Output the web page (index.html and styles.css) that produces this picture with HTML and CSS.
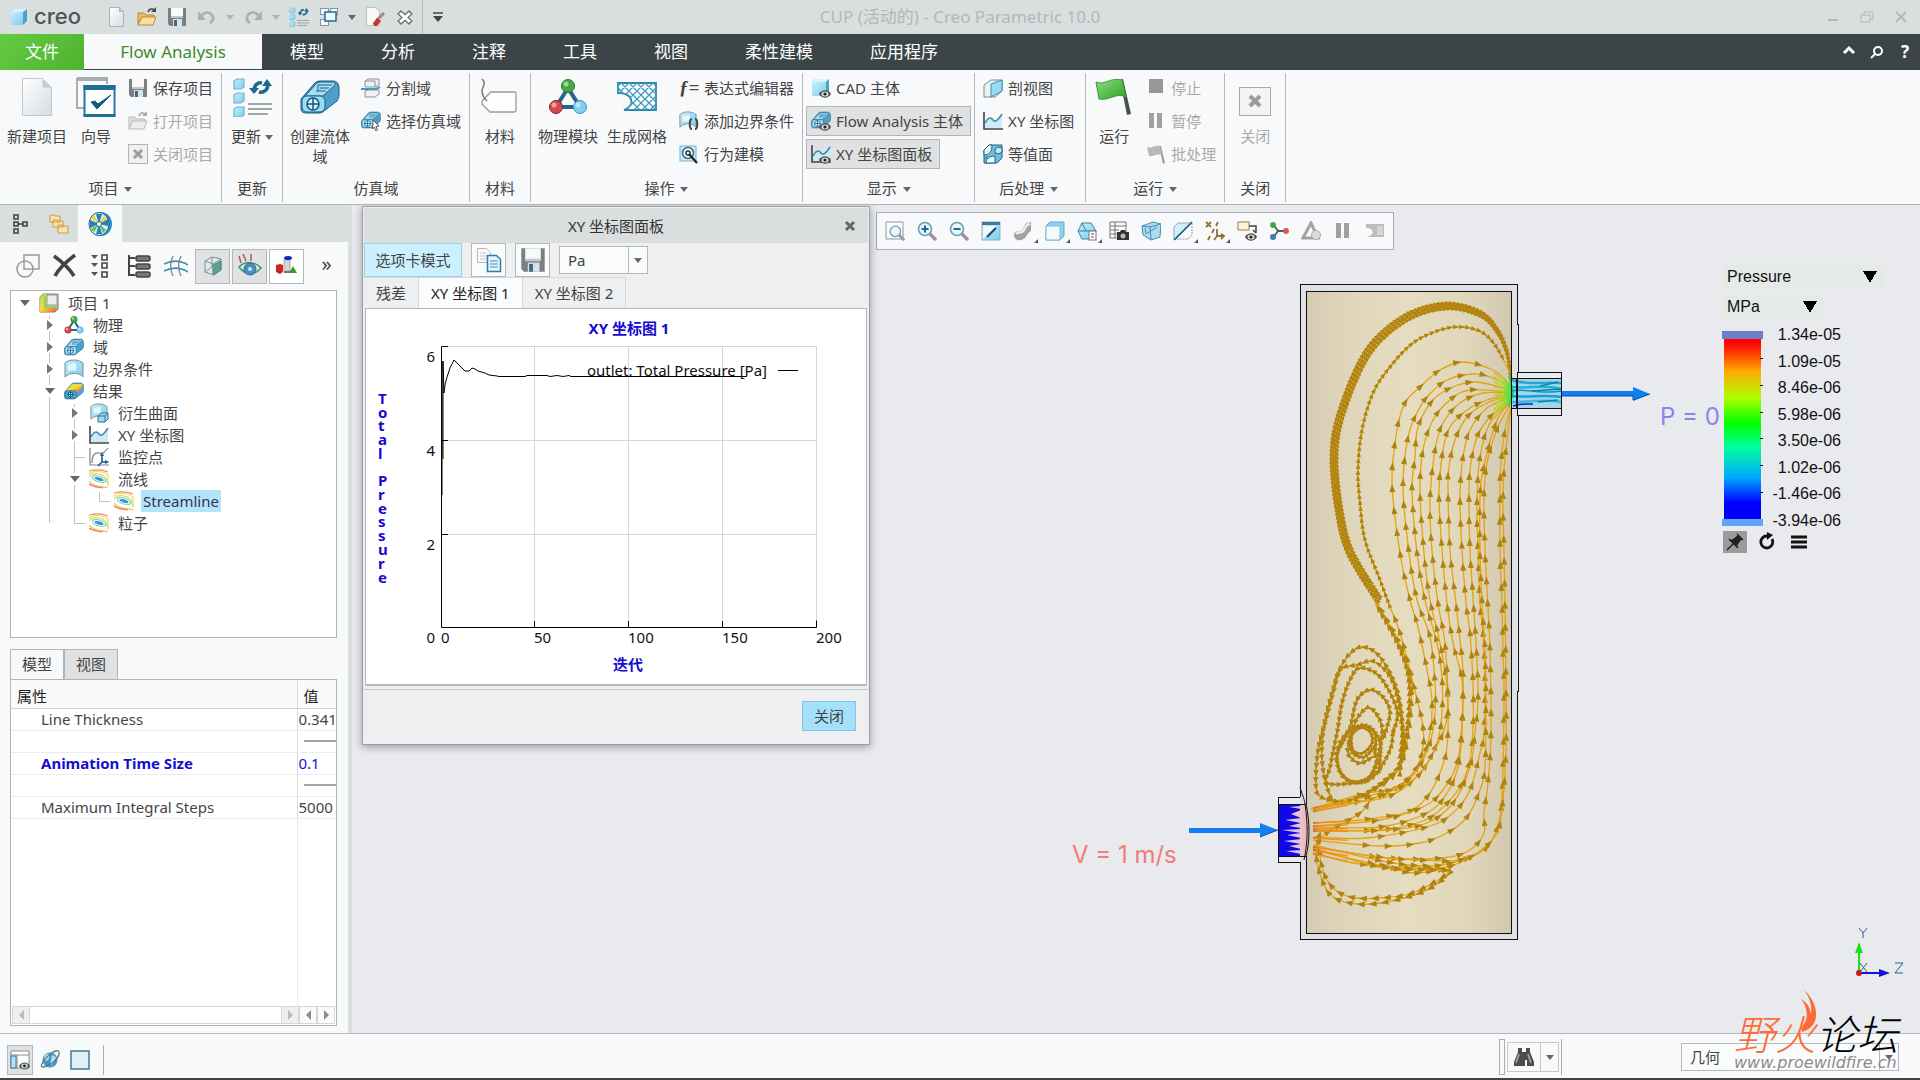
FILE: index.html
```html
<!DOCTYPE html>
<html lang="zh-CN">
<head>
<meta charset="UTF-8" />
<meta name="viewport" content="width=device-width, initial-scale=1"/>
<title>CUP (活动的) - Creo Parametric 10.0</title>
<link rel="stylesheet" href="styles.css">
</head>
<body>
<svg class="sprite" aria-hidden="true">
  <defs>
    <linearGradient id="gCube" x1="0" y1="0" x2="1" y2="1"><stop offset="0" stop-color="#c4eefc"/><stop offset="1" stop-color="#7fcdee"/></linearGradient>
    <linearGradient id="gPaper" x1="0" y1="0" x2="1" y2="1"><stop offset="0" stop-color="#fff"/><stop offset="1" stop-color="#d3dde4"/></linearGradient>
    <linearGradient id="gFlag" x1="0" y1="0" x2="1" y2="1"><stop offset="0" stop-color="#8be07b"/><stop offset="1" stop-color="#2f9e2b"/></linearGradient>
    <linearGradient id="gHot" x1="0" y1="0" x2="1" y2="1"><stop offset="0" stop-color="#9be04a"/><stop offset=".45" stop-color="#ffd93a"/><stop offset="1" stop-color="#f0502e"/></linearGradient>
  </defs>
  <symbol id="i-cube" viewBox="0 0 20 20"><path d="M2 5l4-3h12v12l-4 4H2z" fill="#4ba3c7"/><path d="M2 5l4-3h12l-4 3z" fill="#d9f4fd"/><rect x="2" y="5" width="12" height="13" fill="url(#gCube)"/></symbol>
  <symbol id="i-new" viewBox="0 0 20 20"><path d="M2.500 .500h10l4 4v15h-14z" fill="url(#gPaper)" stroke="#a9b1b6"/><path d="M12.500 .500v4h4" fill="#c5ccd0" stroke="#a9b1b6"/></symbol>
  <symbol id="i-newbig" viewBox="0 0 40 40"><path d="M5.500 1.500h20l9 9v28h-29z" fill="url(#gPaper)" stroke="#c0c6ca"/><path d="M25.500 1.500v9h9" fill="#c5ccd0"/></symbol>
  <symbol id="i-open" viewBox="0 0 20 20"><path d="M1 18V6h6l2 2h8v3" fill="#e9bd63" stroke="#b98a33"/><path d="M1 18l4-8h14l-3 8z" fill="#fbdf9e" stroke="#b98a33"/><path d="M11 5c1-3 4-4 6-2" stroke="#3c4a55" stroke-width="1.600" fill="none"/><path d="M19 0v5h-5z" fill="#3c4a55"/></symbol>
  <symbol id="i-opengray" viewBox="0 0 20 20"><path d="M1 18V6h6l2 2h8v3" fill="#ddd" stroke="#bbb"/><path d="M1 18l4-8h14l-3 8z" fill="#ececec" stroke="#bbb"/><path d="M11 5c1-3 4-4 6-2" stroke="#aaa" stroke-width="1.600" fill="none"/><path d="M19 0v5h-5z" fill="#aaa"/></symbol>
  <symbol id="i-save" viewBox="0 0 20 20"><path d="M1 1h18v18H3l-2-2z" fill="#7b7f82"/><rect x="4" y="1" width="12" height="9" fill="#f7f9fa"/><rect x="4" y="9" width="12" height="2" fill="#c2c8cb"/><rect x="6" y="12" width="9" height="7" fill="#cfe6f2"/><rect x="7" y="13" width="3" height="6" fill="#4d6472"/></symbol>
  <symbol id="i-undo" viewBox="0 0 20 20"><path d="M4 9c3-4 8-5 11-1 2 3 1 6-2 8" fill="none" stroke="#a9b0b2" stroke-width="2.600"/><path d="M1 4v9h8z" fill="#a9b0b2"/></symbol>
  <symbol id="i-redo" viewBox="0 0 20 20"><path d="M16 9c-3-4-8-5-11-1-2 3-1 6 2 8" fill="none" stroke="#a9b0b2" stroke-width="2.600"/><path d="M19 4v9h-8z" fill="#a9b0b2"/></symbol>
  <symbol id="i-update" viewBox="0 0 40 40"><g fill="url(#gCube)" stroke="#6cb7d4" stroke-width="1.200"><path d="M2 4l3-2h7v8l-3 2H2z"/><path d="M2 18l3-2h7v8l-3 2H2z"/><path d="M2 32l3-2h7v8l-3 2H2z"/></g><path d="M22 14c0-6 4-9 8-8" fill="none" stroke="#1d6a8d" stroke-width="3.500"/><path d="M17 11h10l-5 6z" fill="#1d6a8d"/><path d="M36 7c0 6-4 9-9 8" fill="none" stroke="#1d6a8d" stroke-width="3.500"/><path d="M30 9h10l-5-7z" fill="#1d6a8d"/><path d="M16 27h24M16 32h24M16 37h20" stroke="#a1a6a8" stroke-width="2"/></symbol>
  <symbol id="i-windows" viewBox="0 0 20 20"><g fill="#f5f7f8" stroke="#8b9295"><rect x="1.500" y="1.500" width="8" height="6"/><rect x="11.500" y="1.500" width="7" height="6"/><rect x="1.500" y="12.500" width="8" height="6"/></g><rect x="6" y="5" width="11" height="9" fill="#eef9fd" stroke="#1d6a9a" stroke-width="1.500"/></symbol>
  <symbol id="i-erase" viewBox="0 0 20 20"><path d="M1.500 .500h9l4 4v14h-13z" fill="#f9fafa" stroke="#b9bfc2"/><path d="M19 6l-7 7" stroke="#a58a72" stroke-width="3"/><path d="M12 11l4 3-4 5c-2 1-4-1-4-3z" fill="#c8362e"/></symbol>
  <symbol id="i-closewin" viewBox="0 0 20 20"><path d="M4 5l12 11M16 5L4 16" stroke="#6a7072" stroke-width="5.500"/><path d="M5 6l10 9M15 6L5 15" stroke="#fff" stroke-width="3"/></symbol>
  <symbol id="i-wizard" viewBox="0 0 40 40"><path d="M1 1h30v6M1 1v30h7" fill="none" stroke="#a9adaf" stroke-width="2"/><rect x="1" y="1" width="30" height="3" fill="#a9adaf"/><rect x="8.500" y="9" width="30" height="29" fill="#fff" stroke="#2478a0" stroke-width="2"/><path d="M7.500 8h32v5h-32zM7.500 37h32v3h-32z" fill="#1f6f96"/><path d="M15 25l6 7 14-14-13 9-3-3z" fill="#155a80" stroke="#155a80"/></symbol>
  <symbol id="i-xbox" viewBox="0 0 20 20"><rect x=".500" y=".500" width="19" height="19" fill="#f0f0f0" stroke="#b3b3b3"/><path d="M6 6l8 8M14 6l-8 8" stroke="#9c9c9c" stroke-width="3"/></symbol>
  <symbol id="i-xboxbig" viewBox="0 0 32 40"><rect x=".500" y="10.500" width="31" height="28" fill="#f4f4f4" stroke="#a9a9a9"/><path d="M11 19l10 10M21 19l-10 10" stroke="#9c9c9c" stroke-width="4"/></symbol>
  <symbol id="i-domain" viewBox="0 0 40 36"><path d="M1 20L14 5c1-2 4-3 6-3h13c4 0 6 3 6 7v7c0 3-1 4-2 6L24 32c-2 2-3 2-6 2H6c-4 0-5-2-5-5z" fill="#4e9fc6" stroke="#1d5f86"/><path d="M5 17L16 5c2-2 4-2 6-2h10c3 0 4 2 2 4L23 17z" fill="#a7dcf2" stroke="#1d5f86"/><path d="M18 6h14M18 6v6M16 12h10M20 9h9" stroke="#1d5f86" fill="none"/><rect x="2" y="17" width="23" height="16" rx="5" fill="#9adcf5" stroke="#1d5f86"/><circle cx="13" cy="25" r="6" fill="#d4f1fb" stroke="#17567c" stroke-width="1.500"/><path d="M13 19v12M7 25h12" stroke="#17567c" stroke-width="1.500"/></symbol>
  <symbol id="i-result" viewBox="0 0 40 36"><path d="M1 20L14 5c1-2 4-3 6-3h13c4 0 6 3 6 7v7c0 3-1 4-2 6L24 32c-2 2-3 2-6 2H6c-4 0-5-2-5-5z" fill="#57a7cc" stroke="#1d5f86"/><path d="M4 17L16 4h18c3 1 4 4 2 6L25 21z" fill="url(#gHot)"/><rect x="2" y="17" width="23" height="16" rx="5" fill="#3da5d3" stroke="#1d5f86"/><circle cx="13" cy="25" r="5" fill="#d4f1fb" stroke="#17567c" stroke-width="2"/><path d="M13 19v12M7 25h12" stroke="#17567c" stroke-width="2"/></symbol>
  <symbol id="i-split" viewBox="0 0 20 20"><path d="M4 3l3-2h11v6l-4 2H4zM4 13l3-1h11v4l-4 3H4z" fill="#f0f1f2" stroke="#8d9396"/><path d="M4 3h10v6" fill="none" stroke="#8d9396"/><path d="M0 11h15l4-2" stroke="#3d9dbd" stroke-width="2" fill="none"/></symbol>
  <symbol id="i-selectdom" viewBox="0 0 20 20"><use href="#i-domain" x="0" y="0" width="20" height="18"/><path d="M12 9l6 6-3 .500 1.500 3.500-2 .500-1-3.500-2 2z" fill="#fff" stroke="#555"/></symbol>
  <symbol id="i-material" viewBox="0 0 40 40"><path d="M2 24l9-9h23c2 0 2 1 2 2v16c0 2-1 2-2 2H10L2 27z" fill="#fdfdfd" stroke="#9b9b9b" stroke-width="1.300"/><path d="M2 2c5 4 0 8 0 12s2 7 5 10" fill="none" stroke="#777" stroke-width="1.500"/></symbol>
  <symbol id="i-physics" viewBox="0 0 40 38"><path d="M20 10L8 29h24z" fill="none" stroke="#27658a" stroke-width="4"/><circle cx="20" cy="8" r="6.500" fill="#46a83f" stroke="#237a25"/><circle cx="8" cy="29" r="6.500" fill="#d9484b" stroke="#8c1d20"/><circle cx="32" cy="29" r="6.500" fill="#85ccf3" stroke="#4396c4"/><g fill="#fff" opacity=".5"><circle cx="18" cy="6" r="2.500"/><circle cx="6" cy="27" r="2.500"/><circle cx="30" cy="27" r="2.500"/></g></symbol>
  <symbol id="i-mesh" viewBox="0 0 40 40"><clipPath id="cMesh"><path d="M1 6h38v27H7c12-5 9-17-6-17z"/></clipPath><path d="M1 6h38v27H7c12-5 9-17-6-17z" fill="#fff" stroke="#2b88ad" stroke-width="1.800"/><path clip-path="url(#cMesh)" d="M-4 6l27 27M4 6l27 27M12 6l27 27M20 6l27 27M28 6l27 27M36 6l9 9M4 6l-9 9M12 6l-15 15M20 6l-27 27M28 6L1 33M36 6L9 33M44 6L17 33M52 6L25 33M60 6L33 33" fill="none" stroke="#3f9cc0" stroke-width="1.300"/></symbol>
  <symbol id="i-face" viewBox="0 0 20 20"><path d="M1 4c4-4 13-4 18 0v14c-4-5-13-5-18 0z" fill="url(#gCube)" stroke="#7d8b92"/><path d="M4 6c4-2 6-2 8-1v7c-3-1-5-1-8 0z" fill="#e4f7fd"/></symbol>
  <symbol id="i-addbc" viewBox="0 0 20 20"><use href="#i-face" width="18" height="18"/><path d="M13 8c-3 0-3 10 0 10M16 8c3 0 3 10 0 10" fill="none" stroke="#444" stroke-width="2"/></symbol>
  <symbol id="i-behave" viewBox="0 0 20 20"><rect x="1" y="2" width="16" height="15" fill="#c9e9f5" stroke="#7ab4cc"/><circle cx="9" cy="9" r="5.500" fill="#eef8fc" stroke="#3a6f8a" stroke-width="1.500"/><circle cx="9" cy="9" r="2" fill="none" stroke="#333" stroke-width="1.500"/><path d="M10 10l8 9" stroke="#222" stroke-width="2.200"/></symbol>
  <symbol id="i-eye" viewBox="0 0 12 8"><path d="M0 4c3-5 9-5 12 0-3 5-9 5-12 0z" fill="#4c4c4c"/><ellipse cx="6" cy="4" rx="3.500" ry="2.600" fill="#ddd"/><circle cx="6" cy="4" r="1.600" fill="#222"/></symbol>
  <symbol id="i-cubeeye" viewBox="0 0 20 20"><path d="M1 4l3-3h14v14l-3 3H1z" fill="#4ba3c7"/><path d="M1 4l3-3h14l-3 3z" fill="#d9f4fd"/><rect x="1" y="4" width="14" height="14" fill="url(#gCube)"/><use href="#i-eye" x="8" y="12" width="12" height="8"/></symbol>
  <symbol id="i-domeye" viewBox="0 0 20 20"><use href="#i-domain" width="20" height="18"/><use href="#i-eye" x="8" y="12" width="12" height="8"/></symbol>
  <symbol id="i-xy" viewBox="0 0 20 20"><path d="M2 13c3-6 6-6 8-3s5 0 9-6v13H2z" fill="#cdeaf5"/><path d="M2 12c3-6 6-6 8-3s5 0 9-6" fill="none" stroke="#3b8aad" stroke-width="1.500"/><path d="M1 1v17h19" fill="none" stroke="#444" stroke-width="1.600"/></symbol>
  <symbol id="i-xyeye" viewBox="0 0 20 20"><use href="#i-xy" width="20" height="20"/><use href="#i-eye" x="8" y="12" width="12" height="8"/></symbol>
  <symbol id="i-section" viewBox="0 0 20 20"><path d="M1 7l7-5h11v11l-7 6H1z" fill="#eef1f2" stroke="#7b8a91"/><path d="M8 6l11-4v11l-11 6z" fill="#9bdcf5" stroke="#3d8bac"/></symbol>
  <symbol id="i-iso" viewBox="0 0 20 20"><path d="M1 6l5-5h13v13l-5 5H1z" fill="#6fc0e0" stroke="#23617f"/><path d="M1 11c5 0 8-3 8-10H6L1 6z" fill="#e8f7fc" stroke="#23617f"/><path d="M3 19c0-4 3-7 9-7v7z" fill="#e8f7fc" stroke="#23617f"/><path d="M12 5l3-2 4 1v4l-3 2-4-1z" fill="#bfe8f7" stroke="#23617f"/><path d="M1 15l4-3" stroke="#23617f"/></symbol>
  <symbol id="i-flag" viewBox="0 0 40 40"><path d="M26 3l3-1 8 35-4 1z" fill="#4d4d4d"/><path d="M2 5c8 4 14-5 26-2l4 17c-10-5-16 4-27 2z" fill="url(#gFlag)" stroke="#3a9a35"/></symbol>
  <symbol id="i-flaggray" viewBox="0 0 20 20"><path d="M13 2h2l4 17-2 1z" fill="#9c9c9c"/><path d="M1 3c4 2 8-2 13-1l2 9c-5-2-8 2-13 1z" fill="#b9b9b9"/></symbol>
  <symbol id="i-stop" viewBox="0 0 20 20"><rect x="3" y="1" width="14" height="14" fill="#979797"/></symbol>
  <symbol id="i-pause" viewBox="0 0 20 20"><path d="M3 2h5v15H3zM11 2h5v15h-5z" fill="#a0a0a0"/></symbol>
  <symbol id="i-stream" viewBox="0 0 20 20"><g fill="none" stroke-width="1.200"><path d="M0 5c6-4 14-3 19 1v11" stroke="#f7d862"/><path d="M0 2c8-2 14-1 19 1" stroke="#f58a5c"/><path d="M0 8c4-5 13-4 17 1l2 6" stroke="#c3e35a"/><path d="M0 12c4 5 10 5 19 7" stroke="#f4c04a"/><path d="M0 15c4 3 8 3 14 4" stroke="#ee6a5c"/></g><ellipse cx="10" cy="10" rx="7" ry="3" fill="#d7f5f0" stroke="#5fd0c4" transform="rotate(18 10 10)"/><ellipse cx="10" cy="10" rx="4.500" ry="1.500" fill="#3f8cc8" transform="rotate(18 10 10)"/></symbol>
  <symbol id="i-derived" viewBox="0 0 20 20"><use href="#i-face" width="20" height="18"/><path d="M9 13l3-3h7v6l-3 3H9z" fill="#9bdcf5" stroke="#3b6f88"/><path d="M9 13h7v6M16 13l3-3" fill="none" stroke="#3b6f88"/></symbol>
  <symbol id="i-monitor" viewBox="0 0 20 20"><path d="M1 1v17h19M3 16C3 8 6 5 10 6s5 0 9-5" fill="none" stroke="#7c8184" stroke-width="1.200"/><path d="M13 7v8h6M13 15l-4 4" stroke="#1f5e96" stroke-width="1.600" fill="none"/><path d="M13 5l-2 4h4zM20 15l-4-2v4z" fill="#1f5e96"/></symbol>
  <symbol id="i-project" viewBox="0 0 20 20"><path d="M1 4l3-3h15v15l-3 3H1z" fill="#c9d3c4" stroke="#84706a"/><path d="M1 4l3-3h4v12h11l-3 6H1z" fill="url(#gHot)"/><path d="M6 3v11h12" stroke="#7fd46a" stroke-width="2" fill="none"/><rect x="8" y="2" width="10" height="10" fill="#ececec" stroke="#999"/></symbol>
  <symbol id="i-copy" viewBox="0 0 26 26"><path d="M1.500 1.500h9l4 4v10h-13z" fill="#fafafa" stroke="#b1b7ba"/><path d="M4 6h6M4 9h8M4 12h8" stroke="#c1c7ca"/><path d="M11.500 8.500h9l4 4v12h-13z" fill="#e8f5fb" stroke="#2f7ea6" stroke-width="1.500"/><path d="M14 14h8M14 17h8M14 20h8" stroke="#3a8fb7"/></symbol>
  <symbol id="i-globe" viewBox="0 0 20 20"><circle cx="10" cy="10" r="7.500" fill="#3b9cca"/><path d="M5 5c4-3 5 0 4 3s-4 4-5 1zM12 5l4 2-2 6-4 3z" fill="#b6e0f2"/><path d="M3 17C-1 18 3 10 9 5s11-6 10-1-8 12-16 13" fill="none" stroke="#6a767c" stroke-width="1.300"/></symbol>
  <symbol id="i-lens" viewBox="0 0 20 20"><path d="M12 12l7 7" stroke="#9a9a9a" stroke-width="3.500"/><circle cx="8" cy="8" r="6.500" fill="#e9f7fd" stroke="#6e9fb5" stroke-width="1.600"/></symbol>
</svg>

<header class="titlebar">
  <div class="brand"><svg class="ic"><use href="#i-cube"/></svg><span>creo</span></div>
  <div class="quick">
    <button class="qa" aria-label="新建"><svg class="ic"><use href="#i-new"/></svg></button>
    <button class="qa" aria-label="打开"><svg class="ic"><use href="#i-open"/></svg></button>
    <button class="qa" aria-label="保存"><svg class="ic"><use href="#i-save"/></svg></button>
    <button class="qa" aria-label="撤销"><svg class="ic"><use href="#i-undo"/></svg></button>
    <button class="qa-drop dim" aria-label="撤销列表"><i class="tri"></i></button>
    <button class="qa" aria-label="重做"><svg class="ic"><use href="#i-redo"/></svg></button>
    <button class="qa-drop dim" aria-label="重做列表"><i class="tri"></i></button>
    <button class="qa" aria-label="重新生成"><svg class="ic"><use href="#i-update"/></svg></button>
    <button class="qa" aria-label="窗口"><svg class="ic"><use href="#i-windows"/></svg></button>
    <button class="qa-drop" aria-label="窗口列表"><i class="tri"></i></button>
    <button class="qa" aria-label="拭除"><svg class="ic"><use href="#i-erase"/></svg></button>
    <button class="qa" aria-label="关闭窗口"><svg class="ic"><use href="#i-closewin"/></svg></button>
    <button class="qa qa-more" aria-label="自定义"><svg class="ic14" viewBox="0 0 14 14"><path d="M2 3h10" stroke-width="1.500"/><path d="M2 6h10l-5 6z" fill="currentColor" stroke="none"/></svg></button>
  </div>
  <div class="title">CUP (活动的) - Creo Parametric 10.0</div>
  <div class="winctl">
    <button aria-label="最小化"><svg class="ic14" viewBox="0 0 14 14"><path d="M2 10h10" stroke-width="2"/></svg></button>
    <button aria-label="还原"><svg class="ic14" viewBox="0 0 14 14"><path d="M4 4V2h9v7h-3M1 5h9v7H1z"/></svg></button>
    <button aria-label="关闭"><svg class="ic14" viewBox="0 0 14 14"><path d="M2 2l10 10M12 2L2 12" stroke-width="2"/></svg></button>
  </div>
</header>

<nav class="tabs">
  <button class="tab tab-file">文件</button>
  <button class="tab tab-active">Flow Analysis</button>
  <button class="tab">模型</button>
  <button class="tab">分析</button>
  <button class="tab">注释</button>
  <button class="tab">工具</button>
  <button class="tab">视图</button>
  <button class="tab">柔性建模</button>
  <button class="tab">应用程序</button>
  <div class="tabs-end">
    <button aria-label="最小化功能区"><svg class="ic14" viewBox="0 0 14 14"><path d="M2 8l5-5 5 5" stroke-width="3"/></svg></button>
    <button aria-label="搜索"><svg class="ic14" viewBox="0 0 14 14"><circle cx="8" cy="6" r="4" stroke-width="2"/><path d="M5 9l-4 4" stroke-width="2"/></svg></button>
    <button aria-label="帮助">?</button>
  </div>
</nav>

<section class="ribbon">
  <div class="group">
    <div class="group-body">
      <button class="big"><svg class="ic40"><use href="#i-newbig"/></svg>新建项目</button>
      <button class="big big-50"><svg class="ic40"><use href="#i-wizard"/></svg>向导</button>
      <div class="stack">
        <button class="small"><svg class="ic"><use href="#i-save"/></svg>保存项目</button>
        <button class="small" disabled><svg class="ic"><use href="#i-opengray"/></svg>打开项目</button>
        <button class="small" disabled><svg class="ic"><use href="#i-xbox"/></svg>关闭项目</button>
      </div>
    </div>
    <div class="group-name">项目 <i class="tri"></i></div>
  </div>
  <div class="group">
    <div class="group-body">
      <button class="big big-54"><svg class="ic40"><use href="#i-update"/></svg><span>更新 <i class="tri"></i></span></button>
    </div>
    <div class="group-name">更新</div>
  </div>
  <div class="group">
    <div class="group-body">
      <button class="big"><svg class="ic40"><use href="#i-domain"/></svg>创建流体域</button>
      <div class="stack">
        <button class="small"><svg class="ic"><use href="#i-split"/></svg>分割域</button>
        <button class="small"><svg class="ic"><use href="#i-selectdom"/></svg>选择仿真域</button>
      </div>
    </div>
    <div class="group-name">仿真域</div>
  </div>
  <div class="group">
    <div class="group-body">
      <button class="big big-54"><svg class="ic40"><use href="#i-material"/></svg>材料</button>
    </div>
    <div class="group-name">材料</div>
  </div>
  <div class="group">
    <div class="group-body">
      <button class="big"><svg class="ic40"><use href="#i-physics"/></svg>物理模块</button>
      <button class="big big-70"><svg class="ic40"><use href="#i-mesh"/></svg>生成网格</button>
      <div class="stack">
        <button class="small"><span class="fx">ƒ=</span>表达式编辑器</button>
        <button class="small"><svg class="ic"><use href="#i-addbc"/></svg>添加边界条件</button>
        <button class="small"><svg class="ic"><use href="#i-behave"/></svg>行为建模</button>
      </div>
    </div>
    <div class="group-name">操作 <i class="tri"></i></div>
  </div>
  <div class="group">
    <div class="group-body">
      <div class="stack">
        <button class="small"><svg class="ic"><use href="#i-cubeeye"/></svg>CAD 主体</button>
        <button class="small pressed" aria-pressed="true"><svg class="ic"><use href="#i-domeye"/></svg>Flow Analysis 主体</button>
        <button class="small pressed" aria-pressed="true"><svg class="ic"><use href="#i-xyeye"/></svg>XY 坐标图面板</button>
      </div>
    </div>
    <div class="group-name">显示 <i class="tri"></i></div>
  </div>
  <div class="group group-wide">
    <div class="group-body">
      <div class="stack">
        <button class="small"><svg class="ic"><use href="#i-section"/></svg>剖视图</button>
        <button class="small"><svg class="ic"><use href="#i-xy"/></svg>XY 坐标图</button>
        <button class="small"><svg class="ic"><use href="#i-iso"/></svg>等值面</button>
      </div>
    </div>
    <div class="group-name">后处理 <i class="tri"></i></div>
  </div>
  <div class="group">
    <div class="group-body">
      <button class="big big-50"><svg class="ic40"><use href="#i-flag"/></svg>运行</button>
      <div class="stack">
        <button class="small" disabled><svg class="ic"><use href="#i-stop"/></svg>停止</button>
        <button class="small" disabled><svg class="ic"><use href="#i-pause"/></svg>暂停</button>
        <button class="small" disabled><svg class="ic"><use href="#i-flaggray"/></svg>批处理</button>
      </div>
    </div>
    <div class="group-name">运行 <i class="tri"></i></div>
  </div>
  <div class="group">
    <div class="group-body">
      <button class="big big-54" disabled><svg class="ic40"><use href="#i-xboxbig"/></svg>关闭</button>
    </div>
    <div class="group-name">关闭</div>
  </div>
</section>

<main class="work">
  <aside class="side">
    <div class="side-tabs">
      <button aria-label="模型树"><svg class="ic" viewBox="0 0 20 20" fill="none" stroke="#444" stroke-width="1.600"><path d="M4 1h4v4H4zM4 8h4v4H4zM4 15h4v4H4zM13 8h4v4h-4zM8 10h5"/></svg></button>
      <button aria-label="文件夹浏览器"><svg class="ic" viewBox="0 0 20 20" fill="#fbe3a9" stroke="#c39a4b"><path d="M1 1h4l1 1h5v6H1zM4 6h4l1 1h5v6H4zM9 11h4l1 1h5v7H9z"/></svg></button>
      <button class="on" aria-label="Flow Analysis 树"><svg class="ic24" viewBox="0 0 24 24"><ellipse cx="13" cy="12" rx="11" ry="12" fill="#2a8fc4"/><ellipse cx="11" cy="12" rx="10" ry="11.500" fill="#cfeefa" stroke="#1d5f86"/><path d="M11 12L8 2l6 0zM11 12l9-5v7zM11 12l3 10-6 0zM11 12l-9 4V8z" fill="#2a7fb4"/><path d="M11 12l5-8 3 3zM11 12L3 6l3-3z" fill="#f5d33c"/><path d="M11 12l7 6-3 3zM11 12l-5 8-3-3z" fill="#5cc04a"/><circle cx="11" cy="12" r="2.500" fill="#fff" stroke="#1d5f86"/></svg></button>
    </div>
    <div class="side-tools">
      <button class="st" aria-label="形状"><svg class="ic24" viewBox="0 0 24 24" fill="#f0f0f0" stroke="#999" stroke-width="1.500"><rect x="8" y="1" width="15" height="14"/><circle cx="9" cy="15" r="8"/></svg></button>
      <button class="st" aria-label="删除"><svg class="ic24" viewBox="0 0 24 24"><path d="M1 2c7 5 15 12 20 20M22 1C14 7 6 14 2 22" stroke="#444" stroke-width="3.500"/></svg></button>
      <button class="st" aria-label="全部展开"><svg class="ic24" viewBox="0 0 24 24"><path d="M1 1h7L4.500 5zM1 9h7L4.500 13zM1 18h7l-3.500 4z" fill="#555"/><path d="M12 1h5v5h-5zM12 9h5v5h-5zM12 18h5v5h-5z" fill="none" stroke="#444" stroke-width="1.600"/></svg></button>
      <button class="st" aria-label="树"><svg class="ic24" viewBox="0 0 24 24"><path d="M2 1v20h6M2 4h6M2 12h6" fill="none" stroke="#444" stroke-width="2"/><g fill="#777" stroke="#444" stroke-width="1.500"><rect x="9" y="2" width="14" height="5" rx="2"/><rect x="9" y="10" width="14" height="5" rx="2"/><rect x="9" y="18" width="14" height="5" rx="2"/></g></svg></button>
      <button class="st" aria-label="曲面网格"><svg class="ic24" viewBox="0 0 24 24" fill="none"><path d="M9 2c-3 6-3 14 0 20M17 2c-3 6-3 14 0 20" stroke="#888" stroke-width="1.500"/><path d="M0 10c8-4 16-4 24 1M0 17c8-4 16-4 24 1" stroke="#3f93b8" stroke-width="1.600"/></svg></button>
      <button class="st framed down" aria-label="显示主体"><svg class="ic24" viewBox="0 0 24 24"><path d="M4 7l7-4 9 2v11l-7 5-9-3z" fill="#dfe9e9" stroke="#7a939c"/><path d="M12 11l8-4v9l-8 5z" fill="#55a887" stroke="#4b8a80"/><path d="M4 7l8 3v11M12 10l8-5M11 3v10l-7 5M11 13l9 3" fill="none" stroke="#7a939c"/></svg></button>
      <button class="st framed down" aria-label="显示"><svg class="ic24" viewBox="0 0 24 24"><path d="M1 13c6-6 16-6 22 1-6 7-14 9-22-1z" fill="#d6eee6" stroke="#3f8f78" stroke-width="1.500"/><circle cx="12" cy="15" r="6" fill="#4f8fc0" stroke="#2a6a8f"/><circle cx="12" cy="15" r="2" fill="#bfe5f5"/><path d="M3 9L1 2M8 7L5 0M13 7V0" stroke="#b05a5a" stroke-width="1.500"/></svg></button>
      <button class="st framed" aria-label="外观"><svg class="ic24" viewBox="0 0 24 24"><path d="M1 11l4-1 3 1v7l-3 2-4-2z" fill="#cf2222"/><rect x="9" y="6" width="6" height="11" fill="#d5d5d5" stroke="#aaa"/><ellipse cx="13" cy="4" rx="4" ry="2" fill="#1228b8"/><path d="M18 12l4 7h-8z" fill="#2da32d"/><path d="M9 17h7v2H9z" fill="#777"/></svg></button>
      <button class="st more" aria-label="更多">»</button>
    </div>

    <ul class="tree">
      <li><div class="node"><button class="exp open" aria-label="折叠"></button><svg class="ic"><use href="#i-project"/></svg><span>项目 1</span></div>
        <ul>
          <li><div class="node"><button class="exp" aria-label="展开"></button><svg class="ic"><use href="#i-physics"/></svg><span>物理</span></div></li>
          <li><div class="node"><button class="exp" aria-label="展开"></button><svg class="ic"><use href="#i-domain"/></svg><span>域</span></div></li>
          <li><div class="node"><button class="exp" aria-label="展开"></button><svg class="ic"><use href="#i-face"/></svg><span>边界条件</span></div></li>
          <li><div class="node"><button class="exp open" aria-label="折叠"></button><svg class="ic"><use href="#i-result"/></svg><span>结果</span></div>
            <ul>
              <li><div class="node"><button class="exp" aria-label="展开"></button><svg class="ic"><use href="#i-derived"/></svg><span>衍生曲面</span></div></li>
              <li><div class="node"><button class="exp" aria-label="展开"></button><svg class="ic"><use href="#i-xy"/></svg><span>XY 坐标图</span></div></li>
              <li><div class="node leaf"><svg class="ic"><use href="#i-monitor"/></svg><span>监控点</span></div></li>
              <li><div class="node"><button class="exp open" aria-label="折叠"></button><svg class="ic"><use href="#i-stream"/></svg><span>流线</span></div>
                <ul>
                  <li><div class="node leaf"><svg class="ic"><use href="#i-stream"/></svg><span class="picked">Streamline</span></div></li>
                </ul>
              </li>
              <li><div class="node leaf"><svg class="ic"><use href="#i-stream"/></svg><span>粒子</span></div></li>
            </ul>
          </li>
        </ul>
      </li>
    </ul>

    <div class="prop-tabs">
      <button>模型</button>
      <button class="on">视图</button>
    </div>
    <div class="props">
      <table>
        <thead><tr><th>属性</th><th>值</th></tr></thead>
        <tbody>
          <tr><td>Line Thickness</td><td>0.341</td></tr>
          <tr><td></td><td><hr></td></tr>
          <tr class="changed"><td>Animation Time Size</td><td>0.1</td></tr>
          <tr><td></td><td><hr></td></tr>
          <tr><td>Maximum Integral Steps</td><td>5000</td></tr>
        </tbody>
      </table>
      <div class="props-fill"><span></span></div>
      <div class="scrolls">
        <button aria-label="向左" class="sb sb-l dim"></button><span class="track"></span><button aria-label="向右" class="sb sb-r dim"></button>
        <button aria-label="值向左" class="sb sb-l"></button><button aria-label="值向右" class="sb sb-r"></button>
      </div>
    </div>
  </aside>

  <section class="viewport">
    <svg class="scene" viewBox="352 205 1568 828">
      <defs>
        <linearGradient id="gWall" x1="0" x2="1" y1="0" y2="0"><stop offset="0" stop-color="#d5cbb3"/><stop offset=".18" stop-color="#dfd5ba"/><stop offset=".5" stop-color="#e6ddc1"/><stop offset=".8" stop-color="#e0d6ba"/><stop offset="1" stop-color="#d2c8b0"/></linearGradient>
        <linearGradient id="gIn" x1="0" x2="1" y1="0" y2="0"><stop offset="0" stop-color="#e8c4d4"/><stop offset="1" stop-color="#ecb7ab"/></linearGradient>
        <linearGradient id="gInlet" gradientUnits="userSpaceOnUse" x1="1311" x2="1370" y1="0" y2="0"><stop offset="0" stop-color="#b0603c"/><stop offset=".15" stop-color="#ef8a2a"/><stop offset="1" stop-color="#e3a00e"/></linearGradient>
        <linearGradient id="gOutlet" gradientUnits="userSpaceOnUse" x1="1492" x2="1513" y1="0" y2="0"><stop offset="0" stop-color="#e0b020"/><stop offset=".5" stop-color="#9fe020"/><stop offset="1" stop-color="#10e860"/></linearGradient>
      </defs>
      <rect x="1300" y="284" width="217" height="655" fill="#dfe0e6"/>
      <rect x="1306" y="291" width="205" height="642" fill="url(#gWall)"/>
      <path d="M1512 378h49v30h-49z" fill="#a5d5e6"/>
      <path d="M1300 804l6 0c4 16 4 36 0 52h-6z" fill="url(#gIn)"/>
      <g id="flow"></g>
      <g id="fan"></g>
      <g fill="none" stroke-width="2.500">
        <path d="M1512 380c12 5 30 2 49 3" stroke="#27a5d8"/>
        <path d="M1512 387c14 2 32-3 49 2" stroke="#16b6e0"/>
        <path d="M1512 391c14-3 32 4 49 0" stroke="#1590cf" stroke-width="1.500"/>
        <path d="M1512 396c14 2 32-2 49 1" stroke="#12a0e4"/>
        <path d="M1512 402c14 0 32-3 49 0" stroke="#35bce4"/>
        <path d="M1513 406c8-3 12-2 20-2" stroke="#1520c8" stroke-width="1.500"/>
        <path d="M1540 386l18-4M1532 391l30-2M1538 402l20-2" stroke="#0e83a8" stroke-width="1.500"/>
      </g>
      <path d="M1278 804h22v52h-22z" fill="#1008e6"/>
      <path d="M1301 806l-12 1 12 2zM1301 810l-10 4 10 4zM1301 818l-16 2 16 3zM1301 823l-12 3 12 2zM1301 829l-19 1 19 3zM1301 833l-14 2 14 3zM1301 839l-17 2 17 3zM1301 844l-12 2 12 3zM1301 850l-15 1 15 3z" fill="#e8c4d4"/>
      <g fill="none" stroke="#111" shape-rendering="crispEdges">
        <path d="M1300 797V284h217v40h1v48M1518 415v276h-1v248h-217v-77"/>
        <path d="M1306 804V291h205v642h-205v-77"/>
        <path d="M1517 372h44v43h-44zM1511 378h50M1511 408h50M1516 378v30"/>
        <path d="M1300 797h-22v65h22M1278 804h28M1278 856h28"/>
      </g>
      <path d="M1300 787c2 8 4 10 5 17 3 20 3 38-1 56M1306 804c4 18 4 38 0 52" fill="none" stroke="#111"/>
      <g fill="#0f7ff2">
        <path d="M1562 391h71v-4l17 7-17 7v-5h-71z"/>
        <path d="M1189 828h71v-5l18 7-18 7v-4h-71z"/>
      </g>
      <path d="M1562 396h71v4l17-6M1260 837l18-7" fill="none" stroke="#0a4f9e"/>
      <text class="note" x="1660" y="425" fill="#8983ee">P = 0</text>
      <text class="note" x="1072" y="863" fill="#f37b78">V = 1 m/s</text>
      <g>
        <path d="M1859 973v-20" stroke="#1be01b" stroke-width="2"/><path d="M1859 942l4 11h-8z" fill="#1be01b"/>
        <path d="M1859 973h22" stroke="#1010e0" stroke-width="2"/><path d="M1890 973l-11 4v-8z" fill="#1010e0"/>
        <circle cx="1859" cy="973" r="3" fill="#c81818"/>
        <path d="M1859 928l4 5 4-5M1863 933v5M1860 963l7 9M1867 963l-7 9M1895 963h8l-8 10h8" fill="none" stroke="#2b5c9e"/>
      </g>
    </svg>

    <div class="view-tools">
      <button aria-label="重新调整"><svg class="ic" viewBox="0 0 20 20"><path d="M1 1h17v17H1z" fill="#fafafa" stroke="#8f979a"/><use href="#i-lens" x="4" y="4" width="16" height="16"/></svg></button>
      <button aria-label="放大"><svg class="ic" viewBox="0 0 20 20"><use href="#i-lens"/><path d="M8 4.500v7M4.500 8h7" stroke="#1a6a96" stroke-width="2"/></svg></button>
      <button aria-label="缩小"><svg class="ic" viewBox="0 0 20 20"><use href="#i-lens"/><path d="M4.500 8h7" stroke="#1a6a96" stroke-width="2"/></svg></button>
      <button aria-label="重画"><svg class="ic" viewBox="0 0 20 20"><rect x="1" y="1" width="18" height="18" fill="url(#gCube)" stroke="#8fb4c3"/><rect x="1" y="1" width="18" height="3" fill="#477b93"/><path d="M2 18V5h13z" fill="#f3fafd"/><path d="M6 16L15 7" stroke="#194a66" stroke-width="2"/></svg></button>
      <button class="more-dot" aria-label="渲染"><svg class="ic" viewBox="0 0 20 20"><path d="M1 14c0-6 7-2 9-6s1-6 8-7v9c-4 1-4 8-10 9-4 1-7-1-7-5z" fill="#a2a2a2"/><path d="M3 13c2-3 6 0 8-4s2-5 6-6" stroke="#ededed" stroke-width="2.500" fill="none"/></svg></button>
      <button class="more-dot" aria-label="显示样式"><svg class="ic" viewBox="0 0 20 20"><path d="M1 5l4-4h14v14l-4 4H1z" fill="#8fd4ef" stroke="#5fa9c6"/><path d="M1 5h14v14H1z" fill="#f1fafd" stroke="#7fbdd6"/></svg></button>
      <button class="more-dot" aria-label="已保存方向"><svg class="ic" viewBox="0 0 20 20"><path d="M1 10l4-8h9l5 8-4 8H5z" fill="url(#gCube)" stroke="#3b7f9e"/><path d="M5 2l4 8H1M9 10h10" fill="none" stroke="#3b7f9e"/><rect x="12" y="10" width="7" height="9" fill="#fff" stroke="#777"/><path d="M14 13h3M14 16h3" stroke="#555"/></svg></button>
      <button aria-label="视图管理器"><svg class="ic" viewBox="0 0 20 20"><path d="M1 1h16v16H1zM1 5h16M1 9h9M1 13h7M6 1v16" fill="#fbfbfb" stroke="#777"/><path d="M8 11h3l1-2h4l1 2h3v8H8z" fill="#333"/><circle cx="14" cy="15" r="2.500" fill="#bbb"/></svg></button>
      <button aria-label="透视"><svg class="ic" viewBox="0 0 20 20"><path d="M1 5l11-4 8 2-1 13-9 3-8-5z" fill="#a8dcf0" stroke="#4b8ba8"/><path d="M1 5l8 1 11-3M9 6l1 13M4 7l1 6 11-7" fill="none" stroke="#4b8ba8"/></svg></button>
      <button class="more-dot" aria-label="截面"><svg class="ic" viewBox="0 0 20 20"><path d="M1 6l4-4h14L3 18H1z" fill="#d4eef8" stroke="#7fb3c9"/><path d="M19 2v12l-4 4H3" fill="none" stroke="#999" stroke-dasharray="2 1"/><path d="M1 19L19 1" stroke="#1f5f80" stroke-width="1.600"/></svg></button>
      <button class="more-dot" aria-label="基准显示"><svg class="ic" viewBox="0 0 20 20" fill="none" stroke="#94702c" stroke-width="1.800"><path d="M1 1l5 5M6 1L1 6M13 1l-2 4M9 8l-2 4M5 15l-2 4M12 8v7h7M12 15l-3 4M16 13l3 2-3 3"/></svg></button>
      <button aria-label="注释显示"><svg class="ic" viewBox="0 0 20 20"><rect x="1" y="1" width="11" height="8" fill="#fdf6dc" stroke="#9a7c3c"/><path d="M12 5h7v7M16 9l3 3" fill="none" stroke="#444" stroke-width="1.500"/><use href="#i-eye" x="8" y="12" width="12" height="8"/></svg></button>
      <button aria-label="旋转中心"><svg class="ic" viewBox="0 0 20 20"><path d="M9 10L4 3M9 10h8M9 10l-5 7" stroke="#555" stroke-width="1.800"/><circle cx="4" cy="4" r="3" fill="#46a83f"/><circle cx="17" cy="10" r="3" fill="#d9585b"/><circle cx="4" cy="16" r="3" fill="#3b7fae"/></svg></button>
      <button aria-label="模拟" disabled><svg class="ic" viewBox="0 0 20 20"><path d="M10 2L2 17h15z" fill="none" stroke="#a2a2a2" stroke-width="3"/><circle cx="15" cy="14" r="4.500" fill="#ddd" stroke="#aaa"/></svg></button>
      <button aria-label="暂停" disabled><svg class="ic"><use href="#i-pause"/></svg></button>
      <button aria-label="恢复" disabled><svg class="ic" viewBox="0 0 20 20"><path d="M1 3h18v13H1c9-1 9-9 0-9z" fill="#bdbdbd"/><rect x="12" y="5" width="6" height="9" fill="#d5d5d5"/></svg></button>
    </div>

    <div class="legend">
      <select class="leg-select leg-wide" aria-label="变量"><option>Pressure</option></select>
      <select class="leg-select" aria-label="单位"><option>MPa</option></select>
      <div class="leg-scale">
        <div class="leg-bar"><i></i><i></i><i></i><i></i><i></i><i></i></div>
        <ol>
          <li>1.34e-05</li><li>1.09e-05</li><li>8.46e-06</li><li>5.98e-06</li><li>3.50e-06</li><li>1.02e-06</li><li>-1.46e-06</li><li>-3.94e-06</li>
        </ol>
      </div>
      <div class="leg-tools">
        <button class="on" aria-label="固定"><svg class="ic" viewBox="0 0 20 20"><path d="M2 18l6-6" stroke="#222" stroke-width="1.500"/><path d="M5 8l7 7 1-3 4-5-4-4-5 4z" fill="#222"/><path d="M4 7l9 9M12 2l6 6" stroke="#222" stroke-width="1.500"/></svg></button>
        <button aria-label="刷新"><svg class="ic" viewBox="0 0 20 20"><path d="M15 7a6 6 0 1 1-5-3" fill="none" stroke="#111" stroke-width="2.800"/><path d="M10 0v8l6-5z" fill="#111"/></svg></button>
        <button aria-label="菜单"><svg class="ic" viewBox="0 0 20 20"><path d="M2 5h16M2 10h16M2 15h16" stroke="#111" stroke-width="3"/></svg></button>
      </div>
    </div>

    <div class="dialog" role="dialog" aria-label="XY 坐标图面板">
      <div class="dlg-title"><span>XY 坐标图面板</span><button aria-label="关闭面板"><svg class="ic14" viewBox="0 0 14 14"><path d="M3 3l8 8M11 3l-8 8" stroke-width="3"/></svg></button></div>
      <div class="dlg-tools">
        <button class="mode">选项卡模式</button>
        <button class="dt" aria-label="复制"><svg class="ic26"><use href="#i-copy"/></svg></button>
        <button class="dt" aria-label="保存"><svg class="ic26"><use href="#i-save"/></svg></button>
        <div class="combo combo-unit"><select aria-label="压力单位"><option>Pa</option></select></div>
      </div>
      <div class="dlg-tabs">
        <button>残差</button><button class="on">XY 坐标图 1</button><button>XY 坐标图 2</button>
      </div>
      <div class="plot">
        <svg viewBox="0 0 500 375">
          <path d="M75 37.500h375M75 131.500h375M75 225.500h375M168.500 37v281M262.500 37v281M356.500 37v281M450.500 37v281" stroke="#d6d6d6" fill="none"/>
          <path d="M82 37.500h-6.500v281h375v-7M75 131.500h7M75 225.500h7M168.500 318v-6M262.500 318v-6M356.500 318v-6" stroke="#000" fill="none"/>
          <path d="M76 186V52M77 52V150" stroke="#000" fill="none"/>
          <path d="M77 52L78 84L79 76L81 68L84 59L88 51L91 54L94 57L99 62H103L106 59L109 60L112 62L119 64L123 66L131 67L133 67.500H159L161 66.500H181L184 67.500L191 66.500L197 67.500L203 66.500L205 67.500H381" stroke="#000" fill="none"/>
          <path d="M412 61.500h20" stroke="#000"/>
          <text x="401" y="67" text-anchor="end">outlet: Total Pressure [Pa]</text>
          <g text-anchor="end"><text x="69" y="53">6</text><text x="69" y="147">4</text><text x="69" y="241">2</text><text x="69" y="334">0</text></g>
          <text x="75" y="334">0</text><text x="168" y="334">50</text><text x="262" y="334">100</text><text x="356" y="334">150</text><text x="450" y="334">200</text>
          <g class="cap"><text x="263" y="25" text-anchor="middle">XY 坐标图 1</text><text x="262" y="361" text-anchor="middle">迭代</text>
          <text y="95"><tspan x="12">T</tspan><tspan x="12" dy="14">o</tspan><tspan x="12" dy="13">t</tspan><tspan x="12" dy="14">a</tspan><tspan x="12" dy="14">l</tspan><tspan x="12" dy="27">P</tspan><tspan x="12" dy="14">r</tspan><tspan x="12" dy="14">e</tspan><tspan x="12" dy="13">s</tspan><tspan x="12" dy="14">s</tspan><tspan x="12" dy="14">u</tspan><tspan x="12" dy="14">r</tspan><tspan x="12" dy="14">e</tspan></text></g>
        </svg>
      </div>
      <div class="dlg-foot"><button>关闭</button></div>
    </div>
  </section>
</main>

<footer class="status">
  <button class="sbtn on" aria-label="导航器"><svg class="ic" viewBox="0 0 20 20"><path d="M1 1h18v17H1zM1 5h18M7 5v13" fill="#fdfdfd" stroke="#8c8c8c"/><rect x="1" y="6" width="5" height="12" fill="#b9e3f3" stroke="#2f7ea6"/><use href="#i-eye" x="9" y="12" width="11" height="8"/></svg></button>
  <button class="sbtn" aria-label="浏览器"><svg class="ic"><use href="#i-globe"/></svg></button>
  <button class="sbtn" aria-label="全屏"><svg class="ic" viewBox="0 0 20 20"><rect x="1" y="1" width="18" height="18" fill="#e4eef4" stroke="#3b7f93" stroke-width="1.500"/></svg></button>
  <span class="vline"></span>
  <div class="status-end">
    <div class="finder">
      <button aria-label="查找"><svg class="ic" viewBox="0 0 20 20"><path d="M4 1h4v4h4V1h4v4l4 10v4h-7v-6h-2v6H0v-4L4 5z" fill="#4c4c4c"/><path d="M5 7L2 16M14 7l3 9" stroke="#999" stroke-width="2"/></svg></button>
      <button class="finder-drop" aria-label="查找选项"><i class="tri"></i></button>
    </div>
    <div class="combo combo-filter"><select aria-label="选择过滤器"><option>几何</option></select></div>
  </div>
  <div class="mark">
    <svg class="flame" viewBox="0 0 20 42"><path d="M6 0c8 7 13 17 12 27-1 8-7 13-14 15-2-4 2-7 4-12C10 23 8 15 3 9c7 4 9 9 10 15C14 15 12 8 6 0z" fill="#ff6b35"/></svg>
    <div class="mark-name"><b>野火</b>论坛</div>
    <div class="mark-url">www.proewildfire.cn</div>
  </div>
</footer>
<script src="script.js"></script>
</body>
</html>
```

FILE: styles.css
```css
/* Base */
* {
  box-sizing: border-box;
}
body, html {
  margin: 0;
  padding: 0;
  height: 100%;
}
body {
  display: flex;
  flex-direction: column;
  font-family: "Noto Sans", "Noto Sans CJK SC", sans-serif;
  font-size: 15px;
  line-height: 20px;
  color: #444;
  background: #f8f9fb;
  overflow: hidden;
  border-bottom: 2px solid #444;
}
button, select {
  font: inherit;
  color: inherit;
  background: none;
  border: 0;
  padding: 0;
  margin: 0;
}
button {
  display: flex;
  align-items: center;
  justify-content: center;
  white-space: nowrap;
}
ul, ol {
  list-style: none;
  margin: 0;
  padding: 0;
}
.sprite {
  position: absolute;
  width: 0;
  height: 0;
}
.ic { width: 20px; height: 20px; flex: none; }
.ic14 { width: 14px; height: 14px; fill: none; stroke: currentColor; }
.ic24 { width: 24px; height: 24px; fill: none; }
.ic26 { width: 26px; height: 26px; }
.ic40 { width: 40px; height: 40px; flex: none; }
.tri {
  display: inline-block;
  border: 4px solid transparent;
  border-top: 5px solid #666;
  border-bottom: 0;
  vertical-align: middle;
}

/* Title bar */
.titlebar {
  position: relative;
  display: flex;
  align-items: center;
  height: 34px;
  flex: none;
  background: #d9dedf;
}
.brand {
  display: flex;
  align-items: center;
  gap: 5px;
  width: 102px;
  padding-left: 9px;
  font-family: Inter, sans-serif;
  font-size: 22px;
  font-weight: 500;
  color: #4d5557;
}
.brand span { line-height: 28px; padding-bottom: 3px; }
.quick { display: flex; }
.qa { width: 30px; height: 34px; }
.qa-drop { width: 16px; height: 34px; }
.dim .tri { border-top-color: #aeb4b6; }
.qa-more { border-left: 1px solid #b3b8ba; margin-left: 2px; }
.title {
  position: absolute;
  left: 0;
  right: 0;
  text-align: center;
  font-size: 17px;
  color: #b2b8ba;
  pointer-events: none;
}
.winctl {
  display: flex;
  gap: 20px;
  margin-left: auto;
  padding-right: 12px;
  color: #b2b8ba;
}

/* Ribbon tabs */
.tabs {
  display: flex;
  gap: 1px;
  height: 36px;
  flex: none;
  background: #3b4547;
  color: #fff;
  font-size: 17px;
}
.tab { padding: 0 28px; }
.tab-file {
  width: 84px;
  margin-right: -1px;
  background: linear-gradient(135deg, #63cb42, #4fb230);
}
.tab-active {
  width: 178px;
  margin-right: -1px;
  background: #f8f9fb;
  color: #3f8a2a;
  border-bottom: 1px solid #3b4547;
}
.tabs-end {
  display: flex;
  align-items: center;
  gap: 14px;
  margin-left: auto;
  padding-right: 8px;
}
.tabs-end button { width: 14px; font-weight: 700; }

/* Ribbon */
.ribbon {
  display: flex;
  height: 135px;
  flex: none;
  padding: 3px 0 2px;
  background: #f8f9fb;
  border-bottom: 1px solid #b0b4b6;
}
.group {
  display: flex;
  flex-direction: column;
  padding: 0 3px;
  border-right: 1px solid #b4b8ba;
}
.group-wide { padding-right: 6px; }
.group-body { display: flex; flex: 1; }
.group-name { text-align: center; padding-bottom: 4px; }
.group-name .tri { margin-left: 2px; }
.big {
  width: 68px;
  flex-direction: column;
  justify-content: flex-start;
  padding: 4px 2px 0;
  white-space: normal;
  gap: 9px;
}
.big-50 { width: 50px; }
.big-54 { width: 54px; }
.big-70 { width: 70px; }
.stack {
  display: flex;
  flex-direction: column;
  align-items: flex-start;
  gap: 3px;
}
.big + .stack { margin-left: 2px; }
.small {
  height: 30px;
  gap: 5px;
  padding: 0 4px;
  border: 1px solid transparent;
}
.small.pressed {
  padding-right: 7px;
  background: #dfe1e3;
  border-color: #b2b5b7;
}
.big:disabled, .small:disabled { color: #a9a9a9; }
.fx {
  width: 20px;
  font-family: "Liberation Serif", serif;
  font-size: 19px;
  font-weight: 700;
  font-style: italic;
}

/* Work area */
.work {
  display: flex;
  flex: 1;
  min-height: 0;
}
.side {
  display: flex;
  flex-direction: column;
  width: 352px;
  flex: none;
  background: #f7f9fb;
  border-right: 4px solid #dcdfe1;
}
.side-tabs {
  display: flex;
  height: 37px;
  flex: none;
  background: #d9dedf;
}
.side-tabs button { width: 39px; }
.side-tabs .on { width: 44px; background: #f7f9fb; }
.side-tools {
  display: flex;
  align-items: center;
  gap: 2px;
  height: 48px;
  flex: none;
  padding-left: 10px;
}
.st { width: 35px; height: 35px; flex: none; }
.st.framed { border: 1px solid #b4b8ba; background: #fff; }
.st.down { background: #dfe1e3; }
.st.more { font-size: 20px; padding: 0 0 4px 6px; }

/* Tree */
.tree {
  flex: 1;
  margin: 0 11px 0 10px;
  padding: 1px 0 0 3px;
  background: #fff;
  border: 1px solid #b0b4b6;
  min-height: 0;
}
.tree ul {
  position: relative;
  padding-left: 25px;
}
.tree ul::before {
  content: "";
  position: absolute;
  left: 35px;
  top: 2px;
  bottom: 11px;
  border-left: 1px solid #c2c2c2;
}
.node {
  position: relative;
  display: flex;
  align-items: center;
  height: 22px;
}
.node .ic { margin-right: 7px; }
.node span { padding: 1px 2px; }
.node .picked { background: #b5e3fa; color: #335; }
.exp {
  width: 11px;
  height: 12px;
  margin: 0 9px 0 5px;
  background: #fff;
}
.exp::before {
  content: "";
  border: 5px solid transparent;
  border-left: 6px solid #777;
  border-right: 0;
}
.exp.open::before {
  border: 5px solid transparent;
  border-top: 6px solid #666;
  border-bottom: 0;
}
.leaf::before {
  content: "";
  width: 11px;
  margin: 0 4px 0 10px;
  border-top: 1px solid #c2c2c2;
}

/* Properties */
.prop-tabs {
  display: flex;
  margin: 11px 10px 0;
}
.prop-tabs button {
  width: 54px;
  height: 30px;
  padding-bottom: 2px;
  border: 1px solid #b0b4b6;
  border-bottom: 0;
}
.prop-tabs .on { background: #dfe1e3; }
.props {
  display: flex;
  flex-direction: column;
  flex: 1;
  min-height: 0;
  margin: 0 11px 7px 10px;
  background: #fff;
  border: 1px solid #b0b4b6;
}
.props table {
  width: 100%;
  table-layout: fixed;
  border-collapse: collapse;
}
.props th {
  height: 28px;
  padding: 4px 6px 0;
  background: #f9fafb;
  font-weight: 400;
  text-align: left;
  color: #222;
  border-bottom: 1px solid #d0d3d5;
}
.props th:first-child { width: 286px; }
.props th + th, .props td + td { border-left: 1px solid #d8dadc; }
.props td {
  height: 22px;
  padding: 0 0 1px 30px;
  white-space: nowrap;
  overflow: hidden;
  border-bottom: 1px solid #ececec;
}
.props td + td { padding: 0 0 1px 1px; }
.props hr {
  margin: 0 0 0 5px;
  border: 0;
  border-top: 2px solid #a5a5a5;
}
.changed { color: #1410d0; }
.changed td:first-child { font-weight: 700; }
.props-fill { flex: 1; display: flex; }
.props-fill span {
  width: 287px;
  border-right: 1px solid #ececec;
}
.scrolls { display: flex; padding: 0 1px 1px; }
.sb {
  width: 18px;
  height: 18px;
  border: 1px solid #d5d7d9;
  background: #fafafa;
}
.track {
  flex: 1;
  border: solid #d5d7d9;
  border-width: 1px 0;
}
.sb::before {
  content: "";
  border: 5px solid transparent;
}
.sb-l::before { border-left: 0; border-right-color: #8a8a8a; }
.sb-r::before { border-right: 0; border-left-color: #8a8a8a; }
.sb.dim { background: #efefef; }
.sb-l.dim::before { border-right-color: #bbb; }
.sb-r.dim::before { border-left-color: #bbb; }

/* Viewport */
.viewport {
  position: relative;
  flex: 1;
  min-width: 0;
  background: #e8eaee;
  overflow: hidden;
}
.scene {
  display: block;
  width: 100%;
  height: 100%;
}
.note {
  font-family: Inter, sans-serif;
  font-size: 24px;
}
.stream { fill: none; stroke: #e2a314; stroke-width: 1.3; }
.heads { fill: #b0830f; }
.view-tools {
  position: absolute;
  left: 524px;
  top: 7px;
  display: flex;
  padding: 0 2px;
  background: #f8f9fb;
  border: 1px solid #a9aeb2;
}
.view-tools button {
  position: relative;
  width: 32px;
  height: 36px;
}
.more-dot::after {
  content: "";
  position: absolute;
  right: 1px;
  bottom: 6px;
  border: 2px solid #555;
  border-top-color: transparent;
  border-left-color: transparent;
}

/* Colour legend */
.legend {
  position: absolute;
  right: 37px;
  top: 60px;
  width: 160px;
  font-family: "Liberation Sans", sans-serif;
  font-size: 16px;
  color: #111;
}
.leg-select {
  display: block;
  width: 100px;
  height: 24px;
  margin-bottom: 6px;
  padding-left: 4px;
  appearance: none;
  background-color: #e5eae7;
  background-image: conic-gradient(from -30deg at 50% 100%, #000 60deg, transparent 0);
  background-image: linear-gradient(to bottom right, #000 50%, transparent 0), linear-gradient(to bottom left, #000 50%, transparent 0);
  background-repeat: no-repeat;
  background-size: 7px 12px;
  background-position: right 6px center, right 13px center;
}
.leg-wide { width: 160px; }
.leg-scale { display: flex; }
.leg-bar {
  display: flex;
  flex-direction: column;
  justify-content: space-between;
  width: 41px;
  height: 195px;
  margin: 6px 0 0 -1px;
  padding: 19px 0 26px;
  border-top: 8px solid #6b7fcb;
  border-bottom: 7px solid #62a5f4;
  background: linear-gradient(#f00 2%, #ff3c00 8%, #fa0 18%, #af0 33%, #0f0 47%, #00ff9c 60%, #00a8ff 77%, #00f 91%) no-repeat center / 37px 100%;
}
.leg-bar i {
  align-self: flex-end;
  width: 3px;
  border-top: 1px solid #111;
}
.legend ol {
  display: flex;
  flex-direction: column;
  justify-content: space-between;
  width: 78px;
  height: 206px;
  text-align: right;
  line-height: 20px;
}
.leg-tools {
  display: flex;
  gap: 8px;
}
.leg-tools button { width: 24px; height: 22px; }
.leg-tools .on { background: #9b9b9b; }

/* XY plot dialog */
.dialog {
  position: absolute;
  left: 10px;
  top: 1px;
  width: 508px;
  padding: 1px;
  background: #edeff0;
  border: 1px solid #9b9fa2;
  box-shadow: 0 2px 8px rgba(0,0,0,0.35);
}
.dlg-title {
  position: relative;
  display: flex;
  align-items: center;
  justify-content: center;
  height: 35px;
  background: #dadedf;
  color: #333;
}
.dlg-title button {
  position: absolute;
  right: 11px;
  color: #666;
}
.dlg-tools {
  display: flex;
  align-items: center;
  gap: 9px;
}
.mode {
  width: 98px;
  height: 34px;
  background: #cbf0fe;
  border: 1px solid #a5cfdf;
}
.dt {
  width: 35px;
  height: 34px;
  background: #fafbfc;
  border: 1px solid #b4b8ba;
}
.combo {
  position: relative;
  display: flex;
  border: 1px solid #b4b8ba;
  background: #fafbfc;
  height: 28px;
}
.combo select {
  flex: 1;
  padding-left: 8px;
  appearance: none;
}
.combo::before {
  content: "";
  position: absolute;
  right: 18px;
  top: 0;
  bottom: 0;
  border-left: 1px solid #b4b8ba;
}
.combo::after {
  content: "";
  position: absolute;
  right: 5px;
  top: 11px;
  border: 4px solid transparent;
  border-top: 5px solid #666;
  border-bottom: 0;
}
.combo-unit { width: 89px; }
.dlg-tabs { display: flex; }
.dlg-tabs button {
  height: 31px;
  padding: 0 12px;
  border-top: 1px solid #d5d8da;
  border-right: 1px solid #d5d8da;
}
.dlg-tabs .on { background: #fbfcfd; color: #222; }
.plot {
  margin: 0 1px;
  border: 1px solid #b4b8ba;
  border-bottom-width: 2px;
  background: #fff;
}
.plot svg { display: block; width: 100%; }
.plot text { font-size: 15px; fill: #111; }
.plot .cap text { font-weight: 700; fill: #140ad2; }
.dlg-foot {
  display: flex;
  justify-content: flex-end;
  margin-top: 3px;
  padding: 11px 12px 12px 0;
  border-top: 1px solid #c5c8ca;
}
.dlg-foot button {
  width: 54px;
  height: 30px;
  background: #a5e0fb;
  border: 1px solid #84c3e0;
}

/* Status bar */
.status {
  position: relative;
  display: flex;
  align-items: center;
  height: 45px;
  flex: none;
  padding: 7px 7px 0;
  background: #f8f9fb;
  border-top: 1px solid #b4b8ba;
}
.sbtn { width: 26px; height: 30px; margin-right: 4px; }
.sbtn.on { background: #dfe1e3; border: 1px solid #b4b8ba; }
.vline { height: 30px; margin-left: 6px; border-left: 1px solid #a9adaf; }
.status-end {
  display: flex;
  align-items: center;
  gap: 119px;
  margin-left: auto;
  padding: 0 14px 5px 0;
}
.finder {
  display: flex;
  height: 36px;
  padding: 3px 2px;
  border: solid #a9adaf;
  border-width: 0 1px;
  box-shadow: -5px 0 0 -1px #f8f9fb, -5px 0 0 0 #a9adaf;
}
.finder button {
  width: 34px;
  border: 1px solid #c5c8ca;
}
.finder .finder-drop { width: 18px; border-left: 0; }
.combo-filter { width: 218px; }

/* Forum mark over the status bar */
.mark {
  position: absolute;
  right: 16px;
  bottom: 6px;
  width: 170px;
  pointer-events: none;
}
.mark-name {
  font-family: "Noto Sans CJK SC", sans-serif;
  font-size: 41px;
  font-weight: 300;
  font-style: italic;
  line-height: 44px;
  color: #000;
  white-space: nowrap;
}
.mark-name b { font-weight: 300; color: #ff6b35; }
.mark-url {
  font-family: "DejaVu Sans", sans-serif;
  font-size: 16px;
  font-style: italic;
  line-height: 18px;
  color: #8c8c8c;
}
.flame {
  position: absolute;
  left: 64px;
  top: -20px;
  width: 20px;
  height: 42px;
}
```

FILE: script.js
```js
(() => {
  const NS = 'http://www.w3.org/2000/svg';
  const flow = document.getElementById('flow');
  const fan = document.getElementById('fan');

  // streamlines from inlet to outlet: x,y pairs in scene units
  const risers = [
    [1313,808, 1367,793, 1393,790, 1410,777, 1423,757, 1430,733, 1432,700, 1427,670, 1418,627, 1410,600, 1400,553, 1392,483, 1397,430, 1405,403, 1420,387, 1440,370, 1463,362, 1493,370, 1510,385],
    [1313,810, 1347,802, 1397,787, 1417,770, 1430,743, 1435,713, 1435,683, 1430,637, 1417,600, 1409,553, 1403,487, 1408,437, 1417,413, 1427,397, 1447,380, 1473,374, 1490,377, 1510,387],
    [1330,805, 1387,797, 1420,773, 1437,743, 1442,713, 1442,677, 1437,643, 1425,600, 1417,553, 1412,490, 1415,457, 1418,427, 1433,400, 1453,387, 1477,382, 1510,390],
    [1313,812, 1367,800, 1413,780, 1433,753, 1446,723, 1447,687, 1440,643, 1430,600, 1424,553, 1420,490, 1423,450, 1433,420, 1450,400, 1470,390, 1510,392],
    [1313,823, 1360,820, 1407,812, 1427,797, 1440,773, 1447,747, 1448,700, 1445,643, 1438,603, 1432,550, 1430,500, 1435,450, 1443,423, 1460,403, 1483,393, 1510,393],
    [1313,826, 1380,820, 1423,807, 1443,790, 1457,763, 1462,723, 1462,680, 1453,643, 1447,603, 1442,550, 1439,493, 1443,450, 1450,427, 1467,410, 1487,400, 1510,394],
    [1313,827, 1380,827, 1427,813, 1447,793, 1458,767, 1462,733, 1463,673, 1460,640, 1456,603, 1450,550, 1448,487, 1449,467, 1455,440, 1467,417, 1487,403, 1510,396],
    [1313,830, 1380,830, 1420,822, 1440,810, 1460,787, 1470,760, 1473,727, 1473,683, 1470,633, 1466,603, 1462,550, 1460,497, 1463,457, 1470,430, 1487,408, 1510,397],
    [1313,831, 1387,830, 1427,823, 1453,803, 1470,767, 1475,733, 1478,700, 1477,660, 1473,597, 1470,550, 1469,503, 1470,470, 1477,437, 1490,417, 1510,400],
    [1313,837, 1367,838, 1427,827, 1453,813, 1470,790, 1480,753, 1484,733, 1485,677, 1483,633, 1480,603, 1478,550, 1477,503, 1480,457, 1490,423, 1510,402],
    [1313,840, 1380,846, 1420,843, 1447,833, 1467,817, 1480,790, 1485,767, 1486,707, 1485,650, 1482,603, 1480,550, 1480,497, 1483,470, 1497,420, 1510,403],
    [1313,847, 1387,858, 1443,858, 1470,850, 1484,833, 1484,813, 1488,783, 1491,733, 1490,650, 1487,590, 1485,550, 1484,497, 1487,463, 1498,427, 1510,405],
    [1313,847, 1380,857, 1420,860, 1460,860, 1487,847, 1500,817, 1503,767, 1504,687, 1503,653, 1502,603, 1500,550, 1500,487, 1501,463, 1505,430, 1511,407],
    [1313,852, 1353,863, 1413,868, 1447,867, 1477,853, 1497,833, 1503,800, 1506,747, 1506,680, 1505,603, 1504,550, 1503,503, 1504,470, 1507,440, 1511,408]
  ];
  const outerLow = [1313,809, 1345,803, 1372,791, 1398,770, 1408,735, 1411,683, 1400,645, 1377,603];
  const outerTop = [1377,603, 1347,553, 1336,510, 1331,460, 1336,420, 1356,367, 1377,336, 1410,312, 1447,303, 1480,311, 1497,328, 1507,350, 1511,377];
  const inner = [1313,809, 1367,800, 1393,790, 1413,773, 1422,753, 1423,727, 1413,683, 1400,633, 1390,607];
  const innerTop = [1390,607, 1380,580, 1365,540, 1360,503, 1358,470, 1362,430, 1373,393, 1390,367, 1413,343, 1440,330, 1463,327, 1483,333, 1497,348, 1510,373];
  const loops = [
    [1313,850, 1387,867, 1413,873, 1450,870, 1427,890, 1387,902, 1357,904, 1333,897, 1322,880, 1316,853, 1320,833],
    [1313,848, 1380,867, 1433,870, 1448,873, 1413,893, 1380,898, 1357,898, 1340,893, 1327,880, 1320,857, 1322,837, 1360,813, 1370,800],
    [1313,845, 1387,862, 1430,866, 1455,862, 1470,855]
  ];
  const vortex = [
    [1400,773, 1403,733, 1397,690, 1380,657, 1362,647, 1347,657, 1337,677, 1328,707, 1323,733, 1322,760, 1327,787, 1337,802, 1367,793, 1397,770],
    [1400,757, 1402,727, 1393,683, 1375,662, 1357,665, 1340,670, 1333,693, 1325,723, 1318,750, 1316,787, 1323,798, 1340,802],
    [1393,733, 1397,710, 1380,677, 1360,668, 1350,680, 1342,703, 1337,733, 1330,767, 1327,783, 1353,783, 1373,777, 1390,750, 1393,727],
    [1383,740, 1390,713, 1383,697, 1370,690, 1357,700, 1350,727, 1340,743, 1337,763, 1347,780, 1367,780, 1377,760, 1382,727, 1370,708, 1358,717, 1352,733, 1348,753, 1360,763, 1375,755]
  ];
  const core = [
    [1375,755, 1375,733, 1363,725, 1352,733, 1353,750, 1363,753, 1372,743, 1370,732, 1360,728, 1350,738, 1352,752, 1364,757, 1376,745],
    [1379,770, 1380,742, 1368,727, 1352,729, 1343,742, 1337,756, 1341,773, 1354,782, 1370,776, 1378,760]
  ];

  // Catmull-Rom through the points
  function toPath(p) {
    const n = p.length / 2;
    const at = i => {
      const k = Math.max(0, Math.min(n - 1, i));
      return [p[k * 2], p[k * 2 + 1]];
    };
    let d = `M${p[0]} ${p[1]}`;
    for (let i = 0; i < n - 1; i++) {
      const a = at(i - 1), b = at(i), c = at(i + 1), e = at(i + 2);
      d += `C${b[0] + (c[0] - a[0]) / 6} ${b[1] + (c[1] - a[1]) / 6} ${c[0] - (e[0] - b[0]) / 6} ${c[1] - (e[1] - b[1]) / 6} ${c[0]} ${c[1]}`;
    }
    return d;
  }

  function add(parent, name, attrs) {
    const el = document.createElementNS(NS, name);
    for (const key in attrs) el.setAttribute(key, attrs[key]);
    parent.appendChild(el);
    return el;
  }

  function drawStream(points, gap, offset, size, from = 0, to = 0) {
    const line = add(flow, 'path', { class: 'stream', d: toPath(points) });
    const total = line.getTotalLength();
    let d = '';
    for (let s = from + offset; s < total - to; s += gap) {
      const a = line.getPointAtLength(s);
      const b = line.getPointAtLength(s + 1);
      const t = Math.atan2(b.y - a.y, b.x - a.x);
      const c = Math.cos(t) * size, k = Math.sin(t) * size;
      d += `M${a.x + c} ${a.y + k}L${a.x - c - k * 0.75} ${a.y - k + c * 0.75}L${a.x - c + k * 0.75} ${a.y - k - c * 0.75}Z`;
    }
    add(flow, 'path', { class: 'heads', d });
  }

  const scaled = (p, f) => p.map((v, i) => i % 2 ? 470 + (v - 470) * f : 1500 + (v - 1500) * f);

  for (let k = 0; k < 4; k++) {
    drawStream(scaled(outerTop, 1 - k * 0.012), 4, k, 2.5);
  }
  drawStream(outerLow, 11, 6, 4, 50);
  drawStream(outerLow.map((v, i) => i % 2 ? v : v - 2), 7, 3, 3.5, 60);
  drawStream(innerTop, 6, 2, 3, 0, 14);
  drawStream(inner, 14, 6, 4, 40);
  risers.forEach((p, i) => drawStream(p, 22, (i * 7) % 22, 4, 50, 24));
  loops.forEach((p, i) => drawStream(p, 12, i * 4, 4, 60));
  vortex.forEach((p, i) => drawStream(p, i < 2 ? 7 : 6, i * 2, 3.5));
  core.forEach(p => drawStream(p, 4, 0, 3));

  // hot jets leaving the inlet
  [808, 811, 823, 826, 829, 831, 838, 847, 850, 854].forEach(y => {
    const end = y + (y - 830) * 0.3;
    add(fan, 'path', { d: `M1313 ${y}L1348 ${end}`, stroke: 'url(#gInlet)', 'stroke-width': 1.3 });
  });
  // lines turning green where they enter the outlet pipe
  for (let i = 0; i < 11; i++) {
    const y = 383 + i * 2;
    const dy = (i - 4) * 2.6;
    add(fan, 'path', { d: `M1494 ${y + dy}Q1504 ${y} 1512 ${y - dy / 4}`, fill: 'none', stroke: 'url(#gOutlet)', 'stroke-width': 1.5 });
  }
  add(fan, 'path', { d: 'M1509 376L1514 392L1509 407L1512 392Z', fill: '#10e050', stroke: '#10e050' });
})();
```
